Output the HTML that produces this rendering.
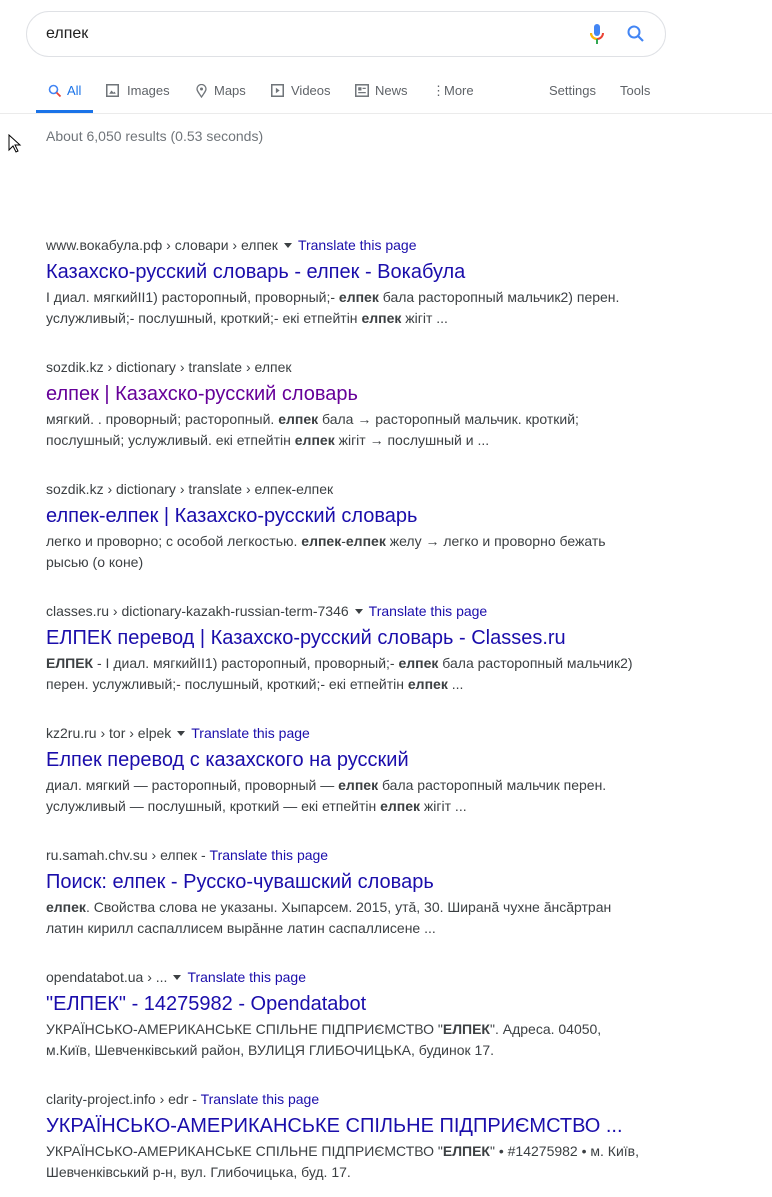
<!DOCTYPE html>
<html><head><meta charset="utf-8"><style>
body{margin:0;width:772px;height:1197px;background:#fff;font-family:"Liberation Sans",Arial,sans-serif;position:relative;overflow:hidden}
.sb{position:absolute;left:26px;top:11px;width:638px;height:44px;border:1px solid #dfe1e5;border-radius:24px}
.q{position:absolute;left:46px;top:25px;font-size:16px;color:#222}
.tabs{position:absolute;top:83px;left:0;width:772px;font-size:13px;color:#5f6368}
.tab{position:absolute;top:0;white-space:nowrap}
.ic{position:absolute;top:1px}
.line{position:absolute;top:113px;left:0;width:772px;height:1px;background:#ebebeb}
.ul{position:absolute;left:36px;top:110px;width:57px;height:3px;background:#1a73e8}
.stats{position:absolute;left:46px;top:128px;font-size:14px;color:#70757a}
.r{position:absolute;left:46px;width:600px}
.u{font-size:14px;color:#3c4043;line-height:18px;white-space:nowrap}
.u a{color:#1a0dab}
.t{font-size:20px;color:#1a0dab;line-height:26px;margin-top:5px;white-space:nowrap}
.v{color:#660099}
.s{font-size:14px;color:#3c4043;line-height:21px;margin-top:2px}
.s b{color:#3c4043}
.tri{display:inline-block;width:0;height:0;border-left:4px solid transparent;border-right:4px solid transparent;border-top:5px solid #3c4043;margin:0 6px 2px 6px;vertical-align:middle}
</style></head><body>
<div class="sb"></div>
<div class="q">елпек</div>
<svg style="position:absolute;left:588px;top:23px" width="18" height="22" viewBox="0 0 18 22"><rect x="6" y="1" width="6" height="12" rx="3" fill="#4285f4"/><path d="M3 10a6 6 0 0 0 12 0" stroke="#ea4335" stroke-width="2" fill="none"/><path d="M3 10a6 6 0 0 0 6 6" stroke="#fbbc05" stroke-width="2" fill="none"/><rect x="8" y="16" width="2" height="5" fill="#34a853"/></svg>
<svg style="position:absolute;left:626px;top:24px" width="20" height="20" viewBox="0 0 20 20"><circle cx="8" cy="8" r="5.5" stroke="#4285f4" stroke-width="2" fill="none"/><path d="M12 12l5 5" stroke="#4285f4" stroke-width="2.2"/></svg>
<div class="tabs">
<svg class="ic" style="left:48px" width="14" height="14" viewBox="0 0 14 14"><circle cx="5.5" cy="5.5" r="4" stroke="#4285f4" stroke-width="1.6" fill="none"/><path d="M8.5 8.5l4 4" stroke="#ea4335" stroke-width="1.8"/></svg>
<span class="tab" style="left:67px;color:#1a73e8">All</span>
<svg class="ic" style="left:106px" width="13" height="13" viewBox="0 0 12 12"><rect x="0.7" y="0.7" width="10.6" height="10.6" fill="none" stroke="#70757a" stroke-width="1.4"/><path d="M3 9l2-3 2 2 1-1 1 2z" fill="#70757a"/></svg>
<span class="tab" style="left:127px">Images</span>
<svg class="ic" style="left:196px" width="11" height="14" viewBox="0 0 11 14"><path d="M5.5 13C2 8 1 6.5 1 5a4.5 4.5 0 0 1 9 0c0 1.5-1 3-4.5 8z" fill="none" stroke="#70757a" stroke-width="1.3"/><circle cx="5.5" cy="5" r="1.5" fill="#70757a"/></svg>
<span class="tab" style="left:214px">Maps</span>
<svg class="ic" style="left:271px" width="13" height="13" viewBox="0 0 12 12"><rect x="0.7" y="0.7" width="10.6" height="10.6" fill="none" stroke="#70757a" stroke-width="1.4"/><path d="M4.5 3.5v5l3.5-2.5z" fill="#70757a"/></svg>
<span class="tab" style="left:291px">Videos</span>
<svg class="ic" style="left:355px" width="14" height="13" viewBox="0 0 13 12"><rect x="0.7" y="0.7" width="11.6" height="10.6" fill="none" stroke="#70757a" stroke-width="1.4"/><rect x="3" y="3" width="3" height="3" fill="#70757a"/><path d="M7 4h3M3 8h7" stroke="#70757a" stroke-width="1.2"/></svg>
<span class="tab" style="left:375px">News</span>
<span class="tab" style="left:432px">⋮</span>
<span class="tab" style="left:444px">More</span>
<span class="tab" style="left:549px">Settings</span>
<span class="tab" style="left:620px">Tools</span>
</div>
<div class="ul"></div><div class="line"></div>
<div class="stats">About 6,050 results (0.53 seconds)</div>
<svg style="position:absolute;left:8px;top:134px" width="14" height="20" viewBox="0 0 14 20"><path d="M1 1v15l4-4 3 6 2-1-3-6h5z" fill="#fff" stroke="#000"/></svg>

<div class="r" style="top:236px"><div class="u">www.вокабула.рф › словари › елпек<span class="tri"></span><a>Translate this page</a></div><div class="t">Казахско-русский словарь - елпек - Вокабула</div><div class="s">I диал. мягкийII1) расторопный, проворный;- <b>елпек</b> бала расторопный мальчик2) перен. услужливый;- послушный, кроткий;- екі етпейтін <b>елпек</b> жігіт ...</div></div>
<div class="r" style="top:358px"><div class="u">sozdik.kz › dictionary › translate › елпек</div><div class="t v">елпек | Казахско-русский словарь</div><div class="s">мягкий. . проворный; расторопный. <b>елпек</b> бала → расторопный мальчик. кроткий; послушный; услужливый. екі етпейтін <b>елпек</b> жігіт → послушный и ...</div></div>
<div class="r" style="top:480px"><div class="u">sozdik.kz › dictionary › translate › елпек-елпек</div><div class="t">елпек-елпек | Казахско-русский словарь</div><div class="s">легко и проворно; с особой легкостью. <b>елпек</b>-<b>елпек</b> желу → легко и проворно бежать рысью (о коне)</div></div>
<div class="r" style="top:602px"><div class="u">classes.ru › dictionary-kazakh-russian-term-7346<span class="tri"></span><a>Translate this page</a></div><div class="t">ЕЛПЕК перевод | Казахско-русский словарь - Classes.ru</div><div class="s"><b>ЕЛПЕК</b> - I диал. мягкийII1) расторопный, проворный;- <b>елпек</b> бала расторопный мальчик2) перен. услужливый;- послушный, кроткий;- екі етпейтін <b>елпек</b> ...</div></div>
<div class="r" style="top:724px"><div class="u">kz2ru.ru › tor › elpek<span class="tri"></span><a>Translate this page</a></div><div class="t">Елпек перевод с казахского на русский</div><div class="s">диал. мягкий — расторопный, проворный — <b>елпек</b> бала расторопный мальчик перен. услужливый — послушный, кроткий — екі етпейтін <b>елпек</b> жігіт ...</div></div>
<div class="r" style="top:846px"><div class="u">ru.samah.chv.su › елпек - <a>Translate this page</a></div><div class="t">Поиск: елпек - Русско-чувашский словарь</div><div class="s"><b>елпек</b>. Свойства слова не указаны. Хыпарсем. 2015, утă, 30. Ширанă чухне ăнсăртран латин кирилл саспаллисем вырăнне латин саспаллисене ...</div></div>
<div class="r" style="top:968px"><div class="u">opendatabot.ua › ...<span class="tri"></span><a>Translate this page</a></div><div class="t">"ЕЛПЕК" - 14275982 - Opendatabot</div><div class="s">УКРАЇНСЬКО-АМЕРИКАНСЬКЕ СПІЛЬНЕ ПІДПРИЄМСТВО "<b>ЕЛПЕК</b>". Адреса. 04050, м.Київ, Шевченківський район, ВУЛИЦЯ ГЛИБОЧИЦЬКА, будинок 17.</div></div>
<div class="r" style="top:1090px"><div class="u">clarity-project.info › edr - <a>Translate this page</a></div><div class="t">УКРАЇНСЬКО-АМЕРИКАНСЬКЕ СПІЛЬНЕ ПІДПРИЄМСТВО ...</div><div class="s">УКРАЇНСЬКО-АМЕРИКАНСЬКЕ СПІЛЬНЕ ПІДПРИЄМСТВО "<b>ЕЛПЕК</b>" • #14275982 • м. Київ, Шевченківський р-н, вул. Глибочицька, буд. 17.</div></div>
</body></html>
